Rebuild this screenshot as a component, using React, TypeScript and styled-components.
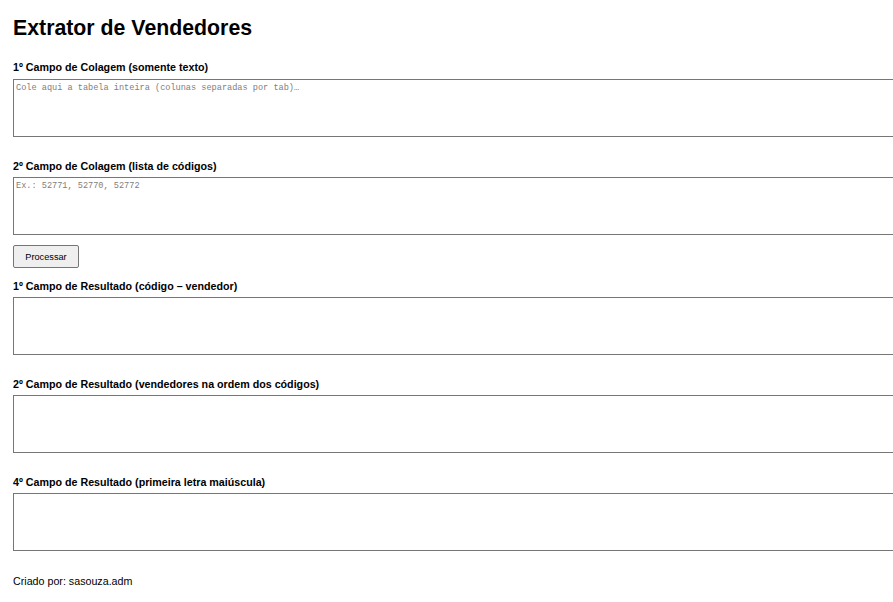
import React from "react";
import styled, { createGlobalStyle } from "styled-components";

const Global = createGlobalStyle`
  html, body { margin: 0; padding: 0; background: #fff; overflow: hidden; }
  body { font-family: "Liberation Sans", Arial, sans-serif; color: #000; }
`;

const Page = styled.div`
  padding: 0 13px;
  display: flex;
  flex-direction: column;
`;

const Title = styled.h1`
  font-size: 21.3px;
  line-height: 24px;
  font-weight: bold;
  margin: 16px 0 21px;
`;

const Field = styled.div<{ $after: number }>`
  display: flex;
  flex-direction: column;
  margin-bottom: ${(p) => p.$after}px;
`;

const Label = styled.label<{ $gap: number }>`
  display: block;
  font-size: 10.7px;
  line-height: 12px;
  font-weight: bold;
  margin-bottom: ${(p) => p.$gap}px;
`;

const Area = styled.textarea`
  display: block;
  box-sizing: border-box;
  width: calc(100% + 20px);
  height: 58px;
  margin: 0;
  padding: 3px 2px 1px;
  border: 1px solid #767676;
  border-radius: 0;
  resize: none;
  font-family: "Liberation Mono", "DejaVu Sans Mono", monospace;
  font-size: 8.58px;
  line-height: 10px;
  color: #000;
  background: #fff;
  &::placeholder { color: #808080; }
`;

const Button = styled.button`
  align-self: flex-start;
  box-sizing: border-box;
  width: 66px;
  height: 23px;
  margin: 0 0 12px;
  padding: 0;
  background: #efefef;
  border: 1px solid #767676;
  border-radius: 2px;
  font-family: "Liberation Sans", Arial, sans-serif;
  font-size: 9.2px;
  color: #000;
`;

const Footer = styled.p`
  font-size: 10.7px;
  line-height: 12px;
  margin: 0;
`;

export default function App() {
  return (
    <>
      <Global />
      <Page>
        <Title>Extrator de Vendedores</Title>
        <Field $after={23}>
          <Label $gap={6}>1º Campo de Colagem (somente texto)</Label>
          <Area placeholder="Cole aqui a tabela inteira (colunas separadas por tab)…" />
        </Field>
        <Field $after={10}>
          <Label $gap={5}>2º Campo de Colagem (lista de códigos)</Label>
          <Area placeholder="Ex.: 52771, 52770, 52772" />
        </Field>
        <Button>Processar</Button>
        <Field $after={23}>
          <Label $gap={5}>1º Campo de Resultado (código – vendedor)</Label>
          <Area readOnly />
        </Field>
        <Field $after={23}>
          <Label $gap={5}>2º Campo de Resultado (vendedores na ordem dos códigos)</Label>
          <Area readOnly />
        </Field>
        <Field $after={24}>
          <Label $gap={5}>4º Campo de Resultado (primeira letra maiúscula)</Label>
          <Area readOnly />
        </Field>
        <Footer>Criado por: sasouza.adm</Footer>
      </Page>
    </>
  );
}
